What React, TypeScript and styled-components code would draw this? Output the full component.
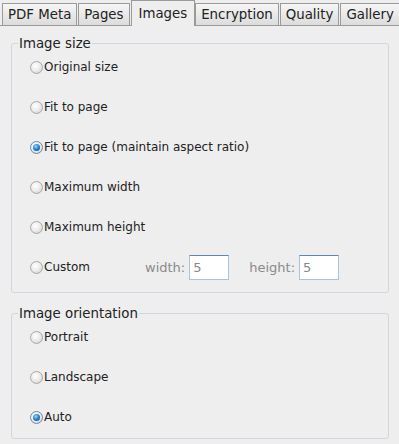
import React, { useState } from "react";
import styled, { createGlobalStyle, css } from "styled-components";

const Global = createGlobalStyle`
  html, body { margin: 0; padding: 0; background: #eeeeee; }
  body { font-family: "DejaVu Sans", "Liberation Sans", sans-serif; color: #222; }
`;

const Frame = styled.div`
  width: 399px;
  height: 444px;
  display: flex;
  flex-direction: column;
  background: #eeeeee;
  overflow: hidden;
`;

const TabBar = styled.div`
  display: flex;
  align-items: flex-end;
  height: 25px;
  padding-left: 2px;
  box-sizing: border-box;
  position: relative;
  z-index: 1;
`;

const Tab = styled.div<{ $active?: boolean }>`
  box-sizing: border-box;
  flex: none;
  white-space: nowrap;
  font-size: 13.33px;
  padding: 0 5px;
  border: 1px solid #9a9a9a;
  border-bottom: none;
  margin-right: 1px;
  display: flex;
  align-items: center;
  color: #222;
  ${(p) =>
    p.$active
      ? css`
          background: #eeeeee;
          padding: 0 7px 1px;
          margin: 0 0 -1px 0;
          height: 26px;
        `
      : css`
          height: 22px;
          background: linear-gradient(#f6f6f6, #dcdcdc);
        `}
`;

const Panel = styled.div`
  flex: 1;
  border-top: 1px solid #9a9a9a;
  padding: 10px 10px 0 11px;
  display: flex;
  flex-direction: column;
  gap: 13px;
`;

const Group = styled.fieldset<{ $pb: number }>`
  margin: 0;
  border: 1px solid #cdd7e1;
  border-radius: 3px;
  padding: 6px 0 ${(p) => p.$pb}px 18px;
  display: flex;
  flex-direction: column;
  gap: 20px;
  min-width: 0;
`;

const Legend = styled.legend`
  font-size: 13.33px;
  line-height: 15px;
  padding: 0 1px;
  margin-left: -12px;
  color: #222;
`;

const Row = styled.div`
  display: flex;
  align-items: center;
  height: 20px;
`;

const RadioLabel = styled.label`
  display: flex;
  align-items: center;
  gap: 1px;
  font-size: 12px;
  cursor: default;
  width: 115px;
  white-space: nowrap;
`;

const Circle = styled.span<{ $on?: boolean }>`
  width: 13px;
  height: 13px;
  border-radius: 50%;
  box-sizing: border-box;
  border: 1px solid ${(p) => (p.$on ? "#6a8cab" : "#a8a8a8")};
  background: radial-gradient(circle at 40% 35%, #ffffff 0%, #e8e8e8 55%, #c8c8c8 100%);
  display: flex;
  align-items: center;
  justify-content: center;
  flex: none;
  &::after {
    content: "";
    display: ${(p) => (p.$on ? "block" : "none")};
    width: 7px;
    height: 7px;
    border-radius: 50%;
    background: radial-gradient(circle at 40% 35%, #9fd4ff 0%, #1f7fd0 50%, #0b4f91 100%);
  }
`;

const FieldLabel = styled.span`
  font-size: 13px;
  color: #8a8a8a;
  margin-right: 4px;
`;

const Field = styled.input`
  box-sizing: border-box;
  width: 40px;
  height: 25px;
  border: 1px solid #a9c3dc;
  border-top-color: #5f88b0;
  background: #ffffff;
  font: 13px "DejaVu Sans", sans-serif;
  color: #888;
  padding: 0 0 0 3px;
  margin: 0;
  outline: none;
`;

const Fields = styled.div`
  display: flex;
  align-items: center;
`;

const FieldGroup = styled.div<{ $ml: number }>`
  display: flex;
  align-items: center;
  margin-left: ${(p) => p.$ml}px;
`;

function Radio({ label, on, onClick }: { label: string; on: boolean; onClick: () => void }) {
  return (
    <RadioLabel onClick={onClick}>
      <Circle $on={on} />
      {label}
    </RadioLabel>
  );
}

export default function App() {
  const [size, setSize] = useState("aspect");
  const [orient, setOrient] = useState("auto");
  const tabs = ["PDF Meta", "Pages", "Images", "Encryption", "Quality", "Gallery"];
  const sizes: [string, string][] = [
    ["orig", "Original size"],
    ["fit", "Fit to page"],
    ["aspect", "Fit to page (maintain aspect ratio)"],
    ["maxw", "Maximum width"],
    ["maxh", "Maximum height"],
  ];
  const orients: [string, string][] = [
    ["portrait", "Portrait"],
    ["landscape", "Landscape"],
    ["auto", "Auto"],
  ];
  return (
    <Frame>
      <Global />
      <TabBar>
        {tabs.map((t) => (
          <Tab key={t} $active={t === "Images"}>
            {t}
          </Tab>
        ))}
      </TabBar>
      <Panel>
        <Group $pb={15}>
          <Legend>Image size</Legend>
          {sizes.map(([k, l]) => (
            <Row key={k}>
              <Radio label={l} on={size === k} onClick={() => setSize(k)} />
            </Row>
          ))}
          <Row>
            <Radio label="Custom" on={size === "custom"} onClick={() => setSize("custom")} />
            <Fields>
              <FieldGroup $ml={0}>
                <FieldLabel>width:</FieldLabel>
                <Field defaultValue="5" />
              </FieldGroup>
              <FieldGroup $ml={20}>
                <FieldLabel>height:</FieldLabel>
                <Field defaultValue="5" />
              </FieldGroup>
            </Fields>
          </Row>
        </Group>
        <Group $pb={11}>
          <Legend>Image orientation</Legend>
          {orients.map(([k, l]) => (
            <Row key={k}>
              <Radio label={l} on={orient === k} onClick={() => setOrient(k)} />
            </Row>
          ))}
        </Group>
      </Panel>
    </Frame>
  );
}
